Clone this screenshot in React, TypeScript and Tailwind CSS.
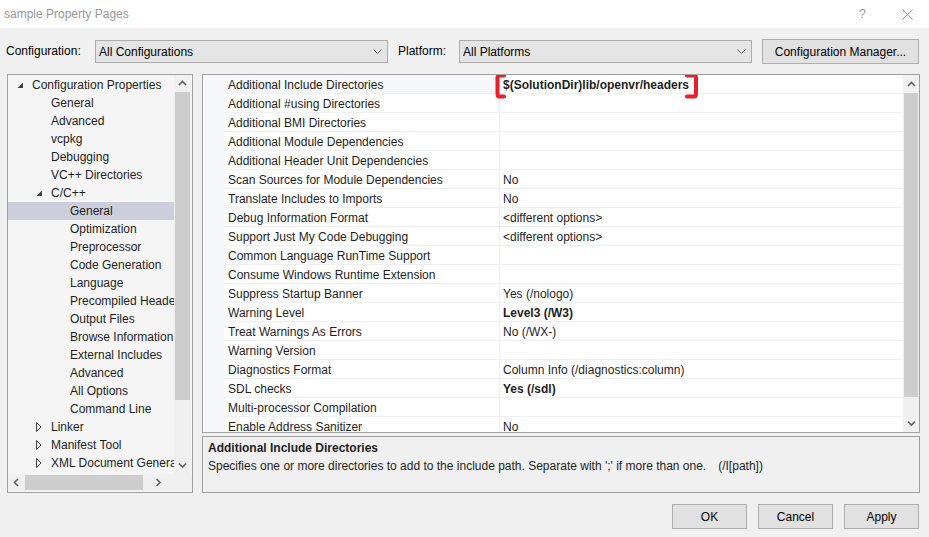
import React from 'react';

type TreeItem = { label: string; level: number; arrow?: 'open' | 'closed'; selected?: boolean };

const treeItems: TreeItem[] = [
  { label: 'Configuration Properties', level: 0, arrow: 'open' },
  { label: 'General', level: 1 },
  { label: 'Advanced', level: 1 },
  { label: 'vcpkg', level: 1 },
  { label: 'Debugging', level: 1 },
  { label: 'VC++ Directories', level: 1 },
  { label: 'C/C++', level: 1, arrow: 'open' },
  { label: 'General', level: 2, selected: true },
  { label: 'Optimization', level: 2 },
  { label: 'Preprocessor', level: 2 },
  { label: 'Code Generation', level: 2 },
  { label: 'Language', level: 2 },
  { label: 'Precompiled Headers', level: 2 },
  { label: 'Output Files', level: 2 },
  { label: 'Browse Information', level: 2 },
  { label: 'External Includes', level: 2 },
  { label: 'Advanced', level: 2 },
  { label: 'All Options', level: 2 },
  { label: 'Command Line', level: 2 },
  { label: 'Linker', level: 1, arrow: 'closed' },
  { label: 'Manifest Tool', level: 1, arrow: 'closed' },
  { label: 'XML Document Generator', level: 1, arrow: 'closed' },
];

type Prop = { name: string; value?: string; bold?: boolean };

const props: Prop[] = [
  { name: 'Additional Include Directories', value: '$(SolutionDir)lib/openvr/headers', bold: true },
  { name: 'Additional #using Directories' },
  { name: 'Additional BMI Directories' },
  { name: 'Additional Module Dependencies' },
  { name: 'Additional Header Unit Dependencies' },
  { name: 'Scan Sources for Module Dependencies', value: 'No' },
  { name: 'Translate Includes to Imports', value: 'No' },
  { name: 'Debug Information Format', value: '<different options>' },
  { name: 'Support Just My Code Debugging', value: '<different options>' },
  { name: 'Common Language RunTime Support' },
  { name: 'Consume Windows Runtime Extension' },
  { name: 'Suppress Startup Banner', value: 'Yes (/nologo)' },
  { name: 'Warning Level', value: 'Level3 (/W3)', bold: true },
  { name: 'Treat Warnings As Errors', value: 'No (/WX-)' },
  { name: 'Warning Version' },
  { name: 'Diagnostics Format', value: 'Column Info (/diagnostics:column)' },
  { name: 'SDL checks', value: 'Yes (/sdl)', bold: true },
  { name: 'Multi-processor Compilation' },
  { name: 'Enable Address Sanitizer', value: 'No' },
];

const Chevron = ({ dir, className = '' }: { dir: 'up' | 'down' | 'left' | 'right'; className?: string }) => {
  const paths = {
    up: 'M1 5 L4.5 1.5 L8 5',
    down: 'M1 1.5 L4.5 5 L8 1.5',
    left: 'M5 1 L1.5 4.5 L5 8',
    right: 'M1.5 1 L5 4.5 L1.5 8',
  };
  const horiz = dir === 'up' || dir === 'down';
  return (
    <svg width={horiz ? 9 : 7} height={horiz ? 7 : 9} viewBox={horiz ? '0 0 9 7' : '0 0 7 9'} className={className}>
      <path d={paths[dir]} fill="none" stroke="#606060" strokeWidth="1.6" />
    </svg>
  );
};

const ComboArrow = () => (
  <svg width="9" height="6" viewBox="0 0 9 6">
    <path d="M0.5 0.5 L4.5 4.5 L8.5 0.5" fill="none" stroke="#606060" strokeWidth="1" />
  </svg>
);

const Combo = ({ value }: { value: string }) => (
  <div className="w-[293px] h-[23px] border border-[#acacac] bg-[#e5e5e5] flex items-center justify-between pl-[3px] pr-[5px]">
    <span>{value}</span>
    <ComboArrow />
  </div>
);

const Btn = ({ label, w }: { label: string; w: string }) => (
  <div className={`${w} h-[25px] border border-[#adadad] bg-[#e1e1e1] flex items-center justify-center`}>{label}</div>
);

const TreeRow = ({ item }: { item: TreeItem }) => {
  const indent = item.level === 0 ? 'pl-[24px]' : item.level === 1 ? 'pl-[43px]' : 'pl-[62px]';
  const arrowPos = item.level === 0 ? 'left-[9px]' : 'left-[28px]';
  return (
    <div className={`relative h-[18px] flex items-center whitespace-nowrap text-[#1e1e1e] ${indent} ${item.selected ? 'bg-[#cccedb]' : ''}`}>
      {item.arrow === 'open' && (
        <svg width="7" height="7" viewBox="0 0 7 7" className={`absolute top-[6px] ${arrowPos}`}>
          <path d="M6 0.5 L6 6 L0.5 6 Z" fill="#404040" />
        </svg>
      )}
      {item.arrow === 'closed' && (
        <svg width="6" height="10" viewBox="0 0 6 10" className={`absolute top-[4px] ${arrowPos}`}>
          <path d="M0.5 0.5 L5 5 L0.5 9.5 Z" fill="none" stroke="#404040" strokeWidth="1" />
        </svg>
      )}
      {item.label}
    </div>
  );
};

export default function App() {
  return (
    <div className="w-[929px] h-[537px] bg-[#f0f0f0] flex flex-col overflow-hidden text-[12px] text-black font-['Liberation_Sans',Arial,sans-serif]">
      {/* Title bar */}
      <div className="h-[28px] bg-white flex items-center justify-between pl-[4px] pr-[16px] text-[#999999]">
        <span>sample Property Pages</span>
        <div className="flex items-center gap-[36px]">
          <span className="text-[13px]">?</span>
          <svg width="11" height="11" viewBox="0 0 11 11">
            <path d="M0.5 0.5 L10.5 10.5 M10.5 0.5 L0.5 10.5" stroke="#999999" strokeWidth="1" />
          </svg>
        </div>
      </div>

      {/* Configuration row */}
      <div className="h-[46px] flex items-start pt-[11px] pl-[6px]">
        <div className="w-[89px] h-[24px] flex items-center">Configuration:</div>
        <div className="pt-[1px]"><Combo value="All Configurations" /></div>
        <div className="w-[61px] h-[24px] ml-[10px] flex items-center">Platform:</div>
        <div className="pt-[1px]"><Combo value="All Platforms" /></div>
        <div className="ml-[10px]"><Btn label="Configuration Manager..." w="w-[157px]" /></div>
      </div>

      {/* Main area */}
      <div className="h-[419px] flex pl-[7px] gap-[9px]">
        {/* Tree */}
        <div className="w-[186px] border border-[#a0a0a0] bg-[#f5f5f5] flex flex-col">
          <div className="flex-1 flex min-h-0">
            <div className="flex-1 min-w-0 overflow-hidden pt-[1px]">
              {treeItems.map((it, i) => <TreeRow key={i} item={it} />)}
            </div>
            <div className="w-[17px] mr-[1px] bg-[#f0f0f0] flex flex-col items-center">
              <div className="h-[17px] flex items-center justify-center"><Chevron dir="up" /></div>
              <div className="w-[15px] h-[308px] bg-[#cdcdcd]" />
              <div className="flex-1" />
              <div className="h-[17px] flex items-center justify-center"><Chevron dir="down" /></div>
            </div>
          </div>
          <div className="h-[17px] flex mb-[1px]">
            <div className="w-[166px] bg-[#f0f0f0] flex items-center">
              <div className="w-[17px] flex justify-center"><Chevron dir="left" /></div>
              <div className="w-[118px] h-[15px] bg-[#cdcdcd]" />
              <div className="flex-1 flex justify-center"><Chevron dir="right" /></div>
            </div>
            <div className="flex-1 bg-[#f0f0f0]" />
          </div>
        </div>

        {/* Right column */}
        <div className="w-[718px] flex flex-col gap-[3px]">
          {/* Property grid */}
          <div className="relative h-[359px] border border-[#a0a0a0] bg-white flex overflow-hidden">
            <div className="w-[21px] bg-[#f5f7fa]" />
            <div className="flex-1 min-w-0">
              {props.map((p, i) => (
                <div key={i} className="h-[19px] flex">
                  <div className={`w-[276px] border-b border-r border-[#eff0f5] pl-[4px] pt-[2px] flex items-center whitespace-nowrap text-[#1e1e1e] ${i === 0 ? 'bg-[#f5f7fa]' : ''}`}>
                    {p.name}
                  </div>
                  <div className={`flex-1 border-b border-[#eff0f5] pl-[3px] pt-[2px] flex items-center whitespace-nowrap text-[#1e1e1e] ${p.bold ? 'font-bold' : ''}`}>
                    {p.value ?? ''}
                  </div>
                </div>
              ))}
            </div>
            <div className="w-[16px] bg-[#f0f0f0] flex flex-col items-center">
              <div className="h-[18px] flex items-center justify-center"><Chevron dir="up" /></div>
              <div className="w-[14px] h-[304px] bg-[#cdcdcd]" />
              <div className="flex-1" />
              <div className="h-[18px] flex items-center justify-center"><Chevron dir="down" /></div>
            </div>
            {/* red annotation brackets */}
            <svg width="12" height="26" viewBox="0 0 12 26" className="absolute left-[292px] top-[-2px]">
              <path d="M9 2.5 L4.5 2.5 Q2.5 2.5 2.5 5 L2.5 21 Q2.5 23.5 4.5 23.5 L9 23.5" fill="none" stroke="#e8202a" strokeWidth="4" strokeLinecap="round" />
            </svg>
            <svg width="14" height="26" viewBox="0 0 14 26" className="absolute left-[482px] top-[-2px]">
              <path d="M2 2.5 L9 2.5 Q11 2.5 11 5 L11 21 Q11 23.5 9 23.5 L2 23.5" fill="none" stroke="#e8202a" strokeWidth="4" strokeLinecap="round" />
            </svg>
          </div>

          {/* Description */}
          <div className="h-[57px] border border-[#a0a0a0] bg-[#f0f0f0] px-[5px] pt-[2px] text-[#1e1e1e]">
            <div className="h-[18px] flex items-center font-bold">Additional Include Directories</div>
            <div className="h-[18px] flex items-center whitespace-nowrap">
              <span>Specifies one or more directories to add to the include path. Separate with ';' if more than one.</span>
              <span className="ml-[12px]">(/I[path])</span>
            </div>
          </div>
        </div>
      </div>

      {/* Buttons */}
      <div className="flex justify-end gap-[11px] pr-[10px] pt-[11px]">
        <Btn label="OK" w="w-[75px]" />
        <Btn label="Cancel" w="w-[75px]" />
        <Btn label="Apply" w="w-[75px]" />
      </div>
    </div>
  );
}
